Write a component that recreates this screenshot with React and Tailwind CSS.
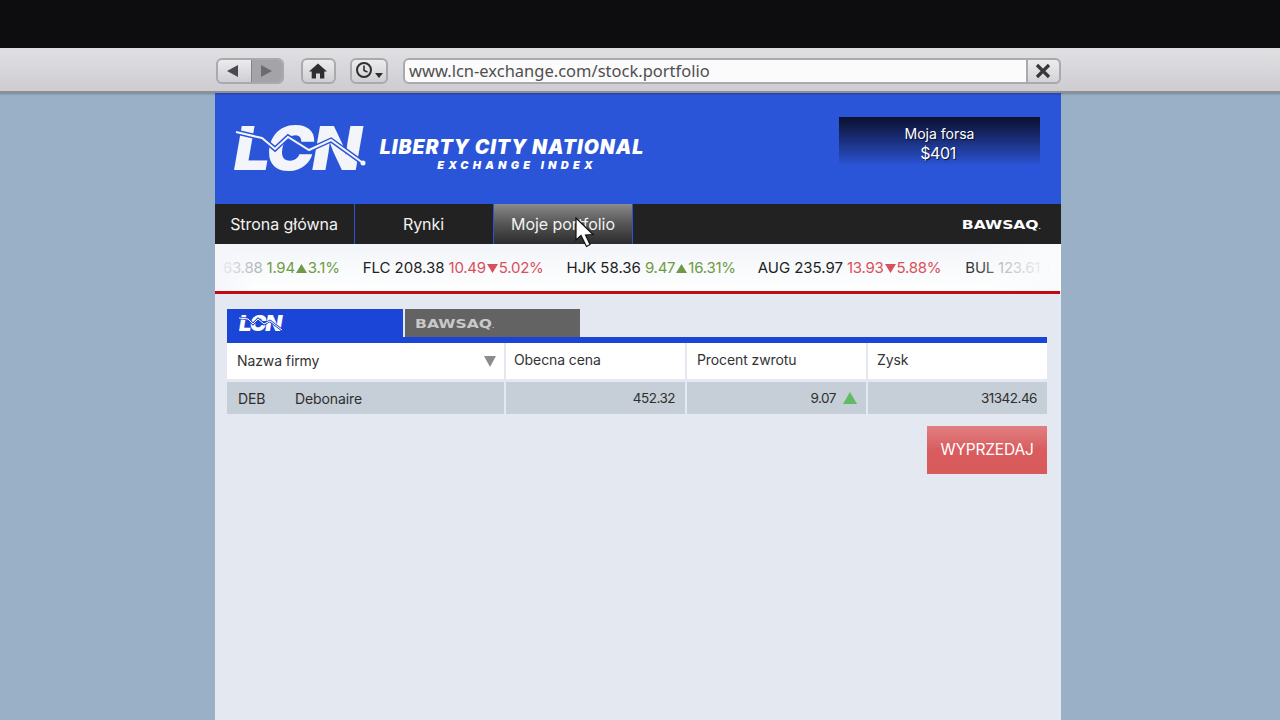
import React from "react";

const Up = ({ c = "#6f9a45", w = 11, h = 9 }) => (
  <svg width={w} height={h} viewBox="0 0 11 9" preserveAspectRatio="none" className="inline-block">
    <path d="M5.5 0 L11 9 L0 9 Z" fill={c} />
  </svg>
);
const Down = ({ c = "#d9505a" }) => (
  <svg width="11" height="9" viewBox="0 0 11 9" className="inline-block">
    <path d="M0 0 L11 0 L5.5 9 Z" fill={c} />
  </svg>
);

const LINE = "1,7 27,13 40,24 53,12 74,25 96,15 128,38";

function LcnLogo() {
  return (
    <div className="relative w-[132px] h-[48px] shrink-0">
      <span className="absolute left-[-1px] top-[-7px] origin-left scale-x-[1.07] font-['Inter',sans-serif] font-black italic text-[60px] leading-[60px] tracking-[-2px] text-[#f3f5fb]">
        LCN
      </span>
      <svg className="absolute left-0 top-0" width="132" height="48" viewBox="0 0 132 48">
        <polyline points={LINE} fill="none" stroke="#2b55d8" strokeWidth="5" />
        <polyline points={LINE} fill="none" stroke="#f3f5fb" strokeWidth="2" />
        <circle cx="128" cy="38" r="2.5" fill="#f3f5fb" />
      </svg>
    </div>
  );
}

function SmallLcn() {
  return (
    <div className="relative w-[44px] h-[18px]">
      <span className="absolute left-0 top-[-1px] origin-left scale-x-[1.05] font-['Inter',sans-serif] font-black italic text-[21px] leading-[21px] tracking-[-1px] text-white">
        LCN
      </span>
      <svg className="absolute left-0 top-[1px]" width="44" height="18" viewBox="0 0 44 18">
        <polyline points="0,3 9,4 14,9 19,4 25,9 31,6 43,15" fill="none" stroke="#1a45d6" strokeWidth="2.5" />
        <polyline points="0,3 9,4 14,9 19,4 25,9 31,6 43,15" fill="none" stroke="#ffffff" strokeWidth="1" />
      </svg>
    </div>
  );
}

const Bawsaq = ({ cls }) => (
  <span className={"inline-block font-['DejaVu_Sans',sans-serif] font-bold leading-none whitespace-nowrap scale-x-[1.2] " + cls}>
    BAWSAQ<span className="text-[5px]">.</span>
  </span>
);

const ChromeBtn = "flex items-center justify-center h-[26px] rounded-[6px] border-2 border-[#a9a9af] bg-gradient-to-b from-[#ececee] to-[#cfcfd3]";

function Ticker({ name, price, change, pct, up, nameCls = "text-[#222] tracking-[0px]", priceCls = "" }) {
  const col = up ? "text-[#6f9a45]" : "text-[#d9505a]";
  return (
    <span className="flex items-center whitespace-nowrap">
      <span className={nameCls}>{name}</span>
      <span className={"ml-[4px] " + (priceCls || nameCls)}>{price}</span>
      <span className={"ml-[4px] " + col}>{change}</span>
      <span className="mx-[1px] flex items-center">
        {up ? <Up /> : <Down />}
      </span>
      <span className={col}>{pct}</span>
    </span>
  );
}

export default function App() {
  return (
    <div className="w-[1280px] h-[720px] overflow-hidden bg-[#9ab0c7] font-['Inter',sans-serif] flex flex-col relative">
      <div className="h-[48px] bg-[#0d0d0f] shrink-0" />
      <div className="h-[45px] shrink-0 bg-gradient-to-b from-[#e0e0e3] to-[#cdccd1] border-t-2 border-t-[#dcdcdf] border-b-2 border-b-[#8e8e94] flex items-center pl-[216px] pt-[1px] z-10 shadow-[0_1px_2px_rgba(0,0,0,0.25)]">
        <div className={ChromeBtn + " w-[68px] overflow-hidden"}>
          <div className="w-[33px] h-full flex items-center justify-center pr-[3px]">
            <svg width="14" height="14" viewBox="0 0 14 14"><path d="M1 7 L12 1 L12 13 Z" fill="#4a4a4e" /></svg>
          </div>
          <div className="flex-1 h-full flex items-center justify-center bg-[#a3a3a8] border-l border-[#85858a] pr-[3px]">
            <svg width="14" height="14" viewBox="0 0 14 14"><path d="M13 7 L2 1 L2 13 Z" fill="#6c6c70" /></svg>
          </div>
        </div>
        <div className={ChromeBtn + " w-[35px] ml-[17px] pr-[1px]"}>
          <svg width="18" height="16" viewBox="0 0 18 16">
            <path d="M9 0.5 L18 8.5 L15.3 8.5 L15.3 15.5 L11 15.5 L11 10.5 L7 10.5 L7 15.5 L2.7 15.5 L2.7 8.5 L0 8.5 Z" fill="#2e2e31" />
          </svg>
        </div>
        <div className={ChromeBtn + " w-[38px] ml-[14px] relative"}>
          <svg className="absolute left-[3px] top-[1px]" width="18" height="18" viewBox="0 0 18 18">
            <circle cx="9" cy="9" r="7" fill="none" stroke="#2e2e31" strokeWidth="2" />
            <path d="M9 4.5 L9 9.5 L12.5 11" fill="none" stroke="#2e2e31" strokeWidth="1.6" />
          </svg>
          <svg className="absolute right-[3px] bottom-[4px]" width="8" height="5" viewBox="0 0 8 5"><path d="M0 0 L8 0 L4 5 Z" fill="#2e2e31" /></svg>
        </div>
        <div className="ml-[15px] w-[658px] h-[26px] flex items-stretch rounded-[6px] border-2 border-[#a9a9af] bg-[#fbfbfb]">
          <div className="flex-1 flex items-center pl-[4px] font-['Noto_Sans',sans-serif] text-[16.5px] text-[#4f4f52]">
            www.lcn-exchange.com/stock.portfolio
          </div>
          <div className="w-[35px] -my-[2px] -mr-[2px] rounded-r-[6px] border-2 border-[#a9a9af] bg-gradient-to-b from-[#ececee] to-[#d4d4d8] flex items-center justify-center pr-[1px]">
            <svg width="16" height="16" viewBox="0 0 16 16"><path d="M2 2 L14 14 M14 2 L2 14" stroke="#38383b" strokeWidth="3.2" /></svg>
          </div>
        </div>
      </div>

      <div className="w-[846px] ml-[215px] flex-1 flex flex-col bg-[#e4e9f1]">
        <div className="h-[111px] shrink-0 bg-[#2b55d8] flex items-start pl-[20px]">
          <div className="mt-[32px]"><LcnLogo /></div>
          <div className="ml-[12px] mt-[43px] w-[266px] text-white italic font-black font-['Inter',sans-serif] text-center">
            <div className="text-[19.5px] leading-[22px] tracking-[0.95px] whitespace-nowrap">LIBERTY CITY NATIONAL</div>
            <div className="text-[11px] leading-[14px] tracking-[4.2px] whitespace-nowrap ml-[10px]">EXCHANGE INDEX</div>
          </div>
          <div className="ml-auto mr-[21px] mt-[24px] w-[201px] h-[49px] bg-gradient-to-b from-[#0b1030] to-[#2b55d8] flex flex-col items-center pt-[8px] text-white [text-shadow:1px_1px_1px_#0b1030]">
            <div className="text-[14px] leading-[18px]">Moja forsa</div>
            <div className="text-[16px] leading-[20px] tracking-[-0.4px] pr-[3px]">$401</div>
          </div>
        </div>

        <div className="h-[40px] shrink-0 bg-[#222222] flex items-stretch text-[16px] tracking-[-0.05px] text-[#f2f2f2] relative z-10">
          <div className="w-[140px] flex items-center justify-center border-r border-[#2b55d8] pb-[1px] pr-[1px]">Strona główna</div>
          <div className="w-[139px] flex items-center justify-center border-r border-[#2b55d8] pb-[1px] pr-[1px]">Rynki</div>
          <div className="w-[139px] flex items-center justify-center border-r border-[#2b55d8] pb-[1px] bg-gradient-to-b from-[#8a8a8a] via-[#555] to-[#2c2c2c]">Moje portfolio</div>
          <div className="ml-auto mr-[20px] flex items-center">
            <Bawsaq cls="text-[13px] text-white origin-right" />
          </div>
          <svg className="absolute left-[360px] top-[13px]" width="20" height="31" viewBox="0 0 20 31">
            <path d="M1 1 L1 23 L6 18.5 L11.5 29.5 L15 27.5 L10.5 18 L18 17.5 Z" fill="#ffffff" stroke="#111" strokeWidth="1.2" />
          </svg>
        </div>

        <div className="h-[47px] shrink-0 bg-gradient-to-b from-[#f2f5f9] to-[#ffffff] overflow-hidden relative flex items-center text-[15px] tracking-[-0.25px] pl-[4px] pt-[1px]">
          <Ticker name="" price="63.88" change="1.94" pct="3.1%" up priceCls="text-[#b5b8bb]" nameCls="hidden" />
          <div className="w-[23px]" />
          <Ticker name="FLC" price="208.38" change="10.49" pct="5.02%" />
          <div className="w-[23px]" />
          <Ticker name="HJK" price="58.36" change="9.47" pct="16.31%" up />
          <div className="w-[22px]" />
          <Ticker name="AUG" price="235.97" change="13.93" pct="5.88%" />
          <div className="w-[24px]" />
          <span className="whitespace-nowrap text-[#333]">BUL <span className="text-[#999]">123.61</span> <span className="text-[#ccc]">17</span></span>
          <div className="absolute left-0 top-0 bottom-0 w-[40px] bg-gradient-to-r from-[#f4f6fa] to-transparent" />
          <div className="absolute right-0 top-0 bottom-0 w-[90px] bg-gradient-to-l from-[#fafbfc] from-10% to-transparent" />
        </div>
        <div className="h-[3px] w-[845px] shrink-0 bg-[#c10a12]" />

        <div className="pl-[12px] pr-[14px] pt-[15px] flex flex-col">
          <div className="flex items-stretch h-[28px] gap-[2px]">
            <div className="w-[176px] bg-[#1a45d6] flex items-center pl-[12px]"><SmallLcn /></div>
            <div className="w-[175px] bg-[#636363] flex items-center pl-[10px]">
              <Bawsaq cls="text-[13px] text-[#c9c9c9] origin-left" />
            </div>
          </div>
          <div className="h-[6px] bg-[#1a45d6]" />
          <div className="flex h-[36px] gap-[2px] text-[14px] tracking-[-0.1px] text-[#333]">
            <div className="w-[277px] bg-white flex items-center pl-[10px] pr-[8px] justify-between">
              <span className="pb-[1px]">Nazwa firmy</span>
              <svg width="12" height="11" viewBox="0 0 12 11"><path d="M0 0 L12 0 L6 11 Z" fill="#8c8c8c" /></svg>
            </div>
            <div className="w-[179px] bg-white flex items-center pl-[8px] pb-[3px]">Obecna cena</div>
            <div className="w-[179px] bg-white flex items-center pl-[10px] pb-[3px]">Procent zwrotu</div>
            <div className="flex-1 bg-white flex items-center pl-[9px] pb-[3px]">Zysk</div>
          </div>
          <div className="flex h-[32px] gap-[2px] mt-[3px] text-[13.5px] text-[#2e2e2e] tracking-[-0.5px]">
            <div className="w-[277px] bg-[#c6ced7] flex items-center pl-[11px] text-[14px] tracking-[-0.1px]">
              <span className="w-[57px]">DEB</span><span>Debonaire</span>
            </div>
            <div className="w-[179px] bg-[#c6ced7] flex items-center justify-end pr-[10px]">452.32</div>
            <div className="w-[179px] bg-[#c6ced7] flex items-center justify-end pr-[9px] gap-[7px]">
              9.07 <Up c="#62bb62" w={14} h={12} />
            </div>
            <div className="flex-1 bg-[#c6ced7] flex items-center justify-end pr-[10px]">31342.46</div>
          </div>
          <div className="flex justify-end mt-[12px]">
            <div className="w-[120px] h-[48px] bg-gradient-to-b from-[#e07f82] via-[#d95c5e] to-[#d85a5b] flex items-center justify-center text-white text-[15.5px] tracking-[-0.2px]">
              WYPRZEDAJ
            </div>
          </div>
        </div>
      </div>
    </div>
  );
}
